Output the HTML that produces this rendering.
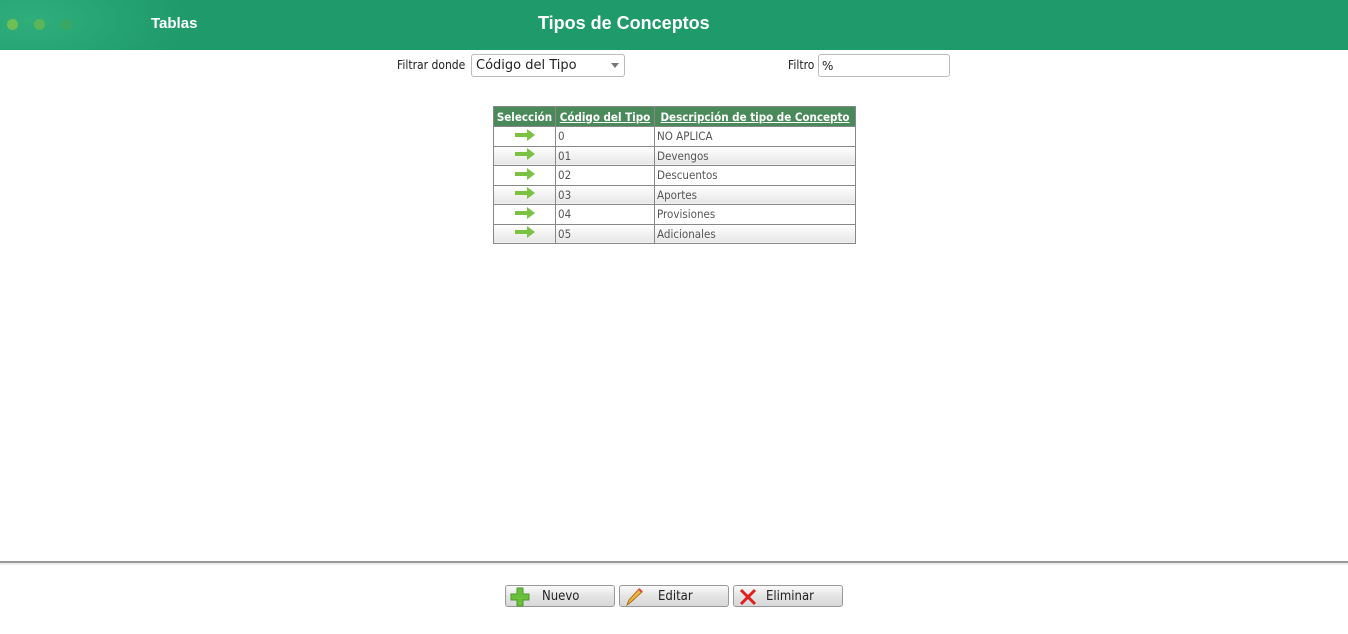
<!DOCTYPE html>
<html><head><meta charset="utf-8"><style>
body{margin:0;width:1348px;height:634px;background:#fff;font-family:"DejaVu Sans","Liberation Sans",sans-serif;position:relative;overflow:hidden}
.hdr{position:absolute;left:0;top:0;width:1348px;height:50px;background:radial-gradient(ellipse 160px 70px at 30px 20px,#2fae7c,#1f9a6a 100%),#1f9a6a;}
.dot{position:absolute;top:19px;width:11px;height:11px;border-radius:50%}
.t{position:absolute;color:#fff;font-weight:bold;font-family:"Liberation Sans",sans-serif}
.lbl{position:absolute;font-size:12px;color:#222;font-family:"DejaVu Sans Condensed","DejaVu Sans",sans-serif}
.box{position:absolute;border:1px solid #bbb;border-radius:3px;background:#fff;font-size:13px;color:#222;box-sizing:border-box}
table{position:absolute;left:493px;top:106px;border-collapse:collapse;table-layout:fixed;width:362px;font-family:"DejaVu Sans Condensed","DejaVu Sans",sans-serif;font-size:11.5px}
th{background:#4a8a5a;color:#fff;height:19px;padding:0 1px;border:1px solid #888;font-size:11.5px;white-space:nowrap;overflow:hidden}
th.u{text-decoration:underline}
td{border:1px solid #888;height:18.5px;padding:0 2px;color:#555;white-space:nowrap}
tr.a td{background:linear-gradient(#fff,#e6e6e6)}
td.s{text-align:center}
.btn{position:absolute;top:585px;width:110px;height:22px;border:1px solid #999;border-radius:3px;box-sizing:border-box;background:linear-gradient(#fafafa,#e4e4e4 50%,#d8d8d8);font-size:13px;color:#222;font-family:"DejaVu Sans Condensed","DejaVu Sans",sans-serif}
.btn svg{position:absolute;left:4px;top:1px}
.btn span{position:absolute;top:3px}
</style></head><body>
<div class="hdr">
<div class="dot" style="left:7px;background:#6fbf55"></div>
<div class="dot" style="left:34px;background:#5cb558"></div>
<div class="dot" style="left:61px;background:#3aa860"></div>
<div class="t" style="left:151px;top:15px;font-size:15px">Tablas</div>
<div class="t" style="left:538px;top:13px;font-size:18px">Tipos de Conceptos</div>
</div>
<div class="lbl" style="left:397px;top:58px">Filtrar donde</div>
<div class="box" style="left:471px;top:54px;width:154px;height:23px;padding:3px 4px">Código del Tipo<span style="position:absolute;right:5px;top:8px;border-left:4px solid transparent;border-right:4px solid transparent;border-top:5px solid #777"></span></div>
<div class="lbl" style="left:788px;top:58px">Filtro</div>
<div class="box" style="left:818px;top:54px;width:132px;height:23px;padding:4px 3px;font-size:12px">%</div>
<table>
<colgroup><col style="width:62px"><col style="width:99px"><col style="width:201px"></colgroup>
<tr><th>Selección</th><th class="u">Código del Tipo</th><th class="u">Descripción de tipo de Concepto</th></tr>
<tr><td class="s"><svg width="22" height="12"><path d="M1 4h12V0l8 6-8 6V8H1z" fill="#7cc242"/></svg></td><td>0</td><td>NO APLICA</td></tr>
<tr class="a"><td class="s"><svg width="22" height="12"><path d="M1 4h12V0l8 6-8 6V8H1z" fill="#7cc242"/></svg></td><td>01</td><td>Devengos</td></tr>
<tr><td class="s"><svg width="22" height="12"><path d="M1 4h12V0l8 6-8 6V8H1z" fill="#7cc242"/></svg></td><td>02</td><td>Descuentos</td></tr>
<tr class="a"><td class="s"><svg width="22" height="12"><path d="M1 4h12V0l8 6-8 6V8H1z" fill="#7cc242"/></svg></td><td>03</td><td>Aportes</td></tr>
<tr><td class="s"><svg width="22" height="12"><path d="M1 4h12V0l8 6-8 6V8H1z" fill="#7cc242"/></svg></td><td>04</td><td>Provisiones</td></tr>
<tr class="a"><td class="s"><svg width="22" height="12"><path d="M1 4h12V0l8 6-8 6V8H1z" fill="#7cc242"/></svg></td><td>05</td><td>Adicionales</td></tr>
</table>
<div style="position:absolute;left:0;top:561px;width:1348px;height:2px;background:#999"></div>
<div style="position:absolute;left:0;top:563px;width:1348px;height:2px;background:#eee"></div>
<div class="btn" style="left:505px"><svg width="20" height="20"><path d="M7 1h6v6h6v6h-6v6H7v-6H1V7h6z" fill="#6cbf3a" stroke="#4a9a2a"/></svg><span style="left:36px">Nuevo</span></div>
<div class="btn" style="left:619px"><svg width="20" height="20"><path d="M3 18l2-5 10-11 3 3-11 10z" fill="#f2b640" stroke="#a87020"/><path d="M15 2l3 3" stroke="#d44" stroke-width="2"/></svg><span style="left:38px">Editar</span></div>
<div class="btn" style="left:733px"><svg width="20" height="20"><path d="M3 3l14 14M17 3L3 17" stroke="#e02020" stroke-width="3"/></svg><span style="left:32px">Eliminar</span></div>
</body></html>
